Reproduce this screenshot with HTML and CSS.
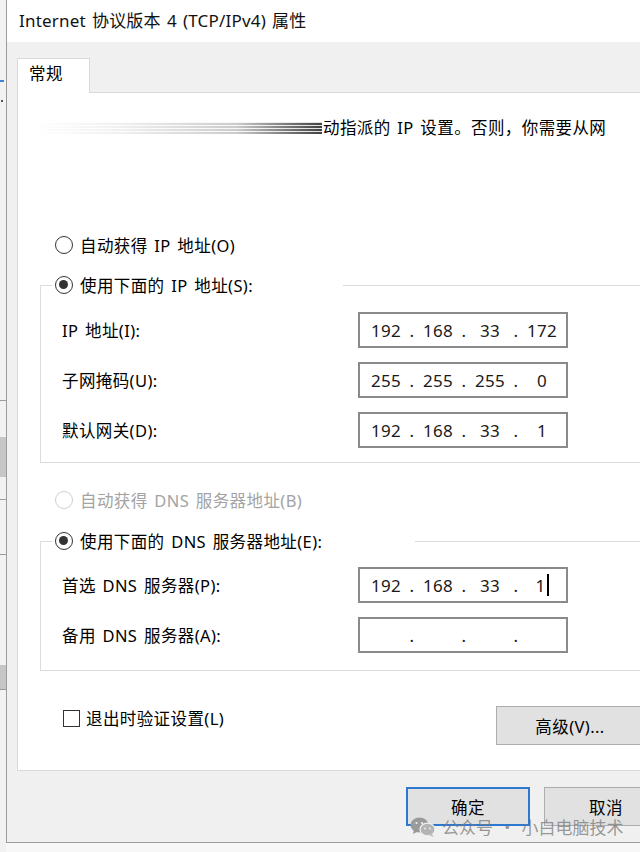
FILE: index.html
```html
<!DOCTYPE html>
<html lang="zh-CN">
<head>
    <meta charset="UTF-8">
    <meta name="viewport" content="width=device-width, initial-scale=1.0">
    <title>Internet 协议版本 4 (TCP/IPv4) 属性</title>
    <link rel="stylesheet" href="styles.css">
</head>
<body>
    <div class="screen">
        <!-- sliver of the window behind the dialog -->
        <div class="behind">
            <div class="gap" style="height: 80px"></div>
            <div class="line blue"></div>
            <div class="gap" style="height: 18px"></div>
            <div class="dot"></div>
            <div class="gap" style="height: 298px"></div>
            <div class="line"></div>
            <div class="gap" style="height: 36px"></div>
            <div class="block" style="height: 40px"></div>
            <div class="gap" style="height: 22px"></div>
            <div class="line"></div>
            <div class="gap" style="height: 54px"></div>
            <div class="line"></div>
            <div class="gap" style="height: 110px"></div>
            <div class="block" style="height: 24px"></div>
            <div class="line"></div>
        </div>

        <div class="stage">
            <div class="dialog">
                <div class="titlebar">Internet 协议版本 4 (TCP/IPv4) 属性</div>

                <div class="dialog-body">
                    <div class="tabs">
                        <div class="tab">常规</div>
                    </div>

                    <div class="panel">
                        <p class="intro"><span class="smear"></span>动指派的 IP 设置。否则，你需要从网</p>

                        <div class="option option-auto-ip">
                            <span class="radio"></span>自动获得 IP 地址(O)
                        </div>

                        <fieldset class="group group-ip">
                            <legend><span class="radio checked"></span>使用下面的 IP 地址(S):</legend>
                            <div class="field">
                                <span>IP 地址(I):</span>
                                <div class="ip-box">
                                    <span>192</span><i>.</i><span>168</span><i>.</i><span>33</span><i>.</i><span>172</span>
                                </div>
                            </div>
                            <div class="field">
                                <span>子网掩码(U):</span>
                                <div class="ip-box">
                                    <span>255</span><i>.</i><span>255</span><i>.</i><span>255</span><i>.</i><span>0</span>
                                </div>
                            </div>
                            <div class="field">
                                <span>默认网关(D):</span>
                                <div class="ip-box">
                                    <span>192</span><i>.</i><span>168</span><i>.</i><span>33</span><i>.</i><span>1</span>
                                </div>
                            </div>
                        </fieldset>

                        <div class="option option-auto-dns disabled">
                            <span class="radio"></span>自动获得 DNS 服务器地址(B)
                        </div>

                        <fieldset class="group group-dns">
                            <legend><span class="radio checked"></span>使用下面的 DNS 服务器地址(E):</legend>
                            <div class="field">
                                <span>首选 DNS 服务器(P):</span>
                                <div class="ip-box">
                                    <span>192</span><i>.</i><span>168</span><i>.</i><span>33</span><i>.</i><span>1<b class="caret"></b></span>
                                </div>
                            </div>
                            <div class="field">
                                <span>备用 DNS 服务器(A):</span>
                                <div class="ip-box">
                                    <span></span><i>.</i><span></span><i>.</i><span></span><i>.</i><span></span>
                                </div>
                            </div>
                        </fieldset>

                        <div class="panel-footer">
                            <div class="check-row">
                                <span class="checkbox"></span>退出时验证设置(L)
                            </div>
                            <button class="btn btn-advanced">高级(V)...</button>
                        </div>
                    </div>

                    <div class="actions">
                        <button class="btn btn-default">确定</button>
                        <button class="btn">取消</button>
                    </div>
                </div>
            </div>
        </div>
    </div>

    <div class="watermark">
        <svg width="26" height="22" viewBox="0 0 26 22">
            <ellipse cx="9.5" cy="9" rx="9" ry="7.5" fill="#9a9a9a"/>
            <path d="M4 14 L3 18 L8 15.5 Z" fill="#9a9a9a"/>
            <ellipse cx="17.5" cy="13.5" rx="7.5" ry="6.3" fill="#b4b4b4" stroke="#f0f0f0" stroke-width="1.2"/>
            <path d="M22 18 L23.5 21 L19.5 19.2 Z" fill="#b4b4b4"/>
            <circle cx="6.5" cy="7" r="1.1" fill="#f0f0f0"/>
            <circle cx="12" cy="7" r="1.1" fill="#f0f0f0"/>
            <circle cx="15" cy="12.5" r="0.9" fill="#f0f0f0"/>
            <circle cx="20" cy="12.5" r="0.9" fill="#f0f0f0"/>
        </svg>
        <span>公众号 · 小白电脑技术</span>
    </div>
</body>
</html>
```

FILE: styles.css
```css
* {
    box-sizing: border-box;
}
html, body {
    margin: 0;
}
body {
    position: relative;
    width: 640px;
    height: 852px;
    overflow: hidden;
    background: #f7f7f7;
    font-family: "Noto Sans", "Noto Sans CJK SC", sans-serif;
    font-size: 16.5px;
    letter-spacing: 0.4px;
    word-spacing: 2px;
    color: #000;
}
.screen {
    display: flex;
    height: 852px;
}

/* window behind */
.behind {
    width: 6px;
    flex: none;
    display: flex;
    flex-direction: column;
    background: #f2f2f2;
}
.behind .gap {
    flex: none;
}
.behind .line {
    height: 1px;
    background: #9a9a9a;
}
.behind .line.blue {
    height: 2px;
    width: 4px;
    background: #3f7fd6;
}
.behind .dot {
    width: 2px;
    height: 2px;
    margin-left: 1px;
    background: #555;
}
.behind .block {
    background: #c6c6c6;
}

/* dialog */
.stage {
    flex: none;
}
.dialog {
    width: 680px;
    height: 843px;
    display: flex;
    flex-direction: column;
    background: #f0f0f0;
    border-left: 1px solid #9c9c9c;
    border-bottom: 1px solid #9c9c9c;
}
.titlebar {
    height: 42px;
    line-height: 42px;
    padding-left: 12px;
    background: #fff;
    font-size: 17px;
    letter-spacing: 0.2px;
    word-spacing: 1.5px;
    color: #111;
}
.dialog-body {
    padding: 16px 10px 0;
}
.tabs {
    display: flex;
}
.tab {
    position: relative;
    z-index: 1;
    width: 73px;
    height: 35px;
    margin-bottom: -1px;
    padding: 2px 0 0 11px;
    background: #fff;
    border: 1px solid #d9d9d9;
    border-bottom: none;
    font-size: 16.5px;
}
.panel {
    height: 679px;
    padding-top: 25px;
    background: #fff;
    border: 1px solid #d9d9d9;
}
.intro {
    margin: 0;
    height: 20px;
    line-height: 20px;
    padding-left: 17px;
    display: flex;
    align-items: center;
    white-space: nowrap;
}
.smear {
    display: inline-block;
    flex: none;
    width: 287px;
    height: 12px;
    margin-right: 1px;
    background:
        repeating-linear-gradient(to bottom, rgba(255,255,255,0.85) 0 1px, transparent 1px 3px),
        linear-gradient(to right, rgba(0,0,0,0) 0%, rgba(0,0,0,0.06) 30%, rgba(0,0,0,0.2) 70%, rgba(0,0,0,0.75) 100%);
}

/* radio options */
.option {
    display: flex;
    align-items: center;
    height: 24px;
    padding-left: 37px;
    white-space: nowrap;
}
.option-auto-ip {
    margin-top: 95px;
}
.option-auto-dns {
    margin-top: 25px;
}
.option.disabled {
    color: #a3a3a3;
}
.radio {
    display: inline-block;
    width: 18px;
    height: 18px;
    margin-right: 7px;
    border: 1.5px solid #333;
    border-radius: 50%;
    flex: none;
    position: relative;
}
.radio.checked::after {
    content: "";
    position: absolute;
    left: 3px;
    top: 3px;
    width: 9px;
    height: 9px;
    border-radius: 50%;
    background: #333;
}
.disabled .radio {
    border-color: #cfcfcf;
}

/* group boxes */
.group {
    margin: 0 22px;
    padding: 0 0 14px 21px;
    border: 1px solid #dcdcdc;
    min-inline-size: 0;
}
.group-ip {
    margin-top: 16px;
}
.group-dns {
    margin-top: 17px;
    padding-bottom: 17px;
}
.group legend {
    display: flex;
    align-items: center;
    height: 24px;
    margin-left: -10px;
    padding: 0 0 0 3px;
    white-space: nowrap;
}
.group-ip legend {
    width: 291px;
}
.group-dns legend {
    width: 363px;
}
.field {
    display: flex;
    align-items: center;
    margin-top: 14px;
}
.field:first-of-type {
    margin-top: 15px;
}
.group-dns .field:first-of-type {
    margin-top: 14px;
}
.field > span {
    width: 296px;
    flex: none;
}
.ip-box {
    width: 210px;
    height: 36px;
    padding-left: 4px;
    display: grid;
    grid-template-columns: 44px 8px 44px 8px 44px 8px 44px;
    align-items: center;
    border: 2px solid #8a8a8a;
    background: #fff;
    font-family: "Noto Sans", sans-serif;
    font-size: 17px;
    letter-spacing: 0.3px;
    color: #1a1a1a;
}
.ip-box span {
    text-align: center;
}
.ip-box i {
    font-style: normal;
    text-align: center;
}
.caret {
    display: inline-block;
    width: 2px;
    height: 22px;
    margin-left: 1px;
    vertical-align: -4px;
    background: #000;
}

/* footer inside the panel */
.panel-footer {
    display: flex;
    justify-content: space-between;
    align-items: flex-start;
    margin-top: 35px;
    padding: 0 31px 0 45px;
}
.check-row {
    display: flex;
    align-items: center;
    height: 24px;
}
.checkbox {
    width: 17px;
    height: 17px;
    margin-right: 6px;
    border: 1.5px solid #333;
}

/* buttons */
.btn {
    height: 39px;
    background: #e1e1e1;
    border: 1px solid #adadad;
    font-family: "Noto Sans", "Noto Sans CJK SC", sans-serif;
    font-size: 16.5px;
    letter-spacing: 0.4px;
    color: #000;
    padding: 0;
}
.btn-advanced {
    width: 148px;
}
.actions {
    display: flex;
    gap: 14px;
    margin-top: 16px;
    padding-left: 389px;
}
.actions .btn {
    width: 124px;
}
.btn-default {
    border: 2px solid #2f78d0;
}

/* watermark overlay */
.watermark {
    position: absolute;
    left: 410px;
    top: 814px;
    display: flex;
    align-items: center;
    gap: 6px;
    font-family: "Noto Sans CJK SC", sans-serif;
    font-size: 17px;
    letter-spacing: 0;
    color: rgba(120, 120, 120, 0.75);
}
```
